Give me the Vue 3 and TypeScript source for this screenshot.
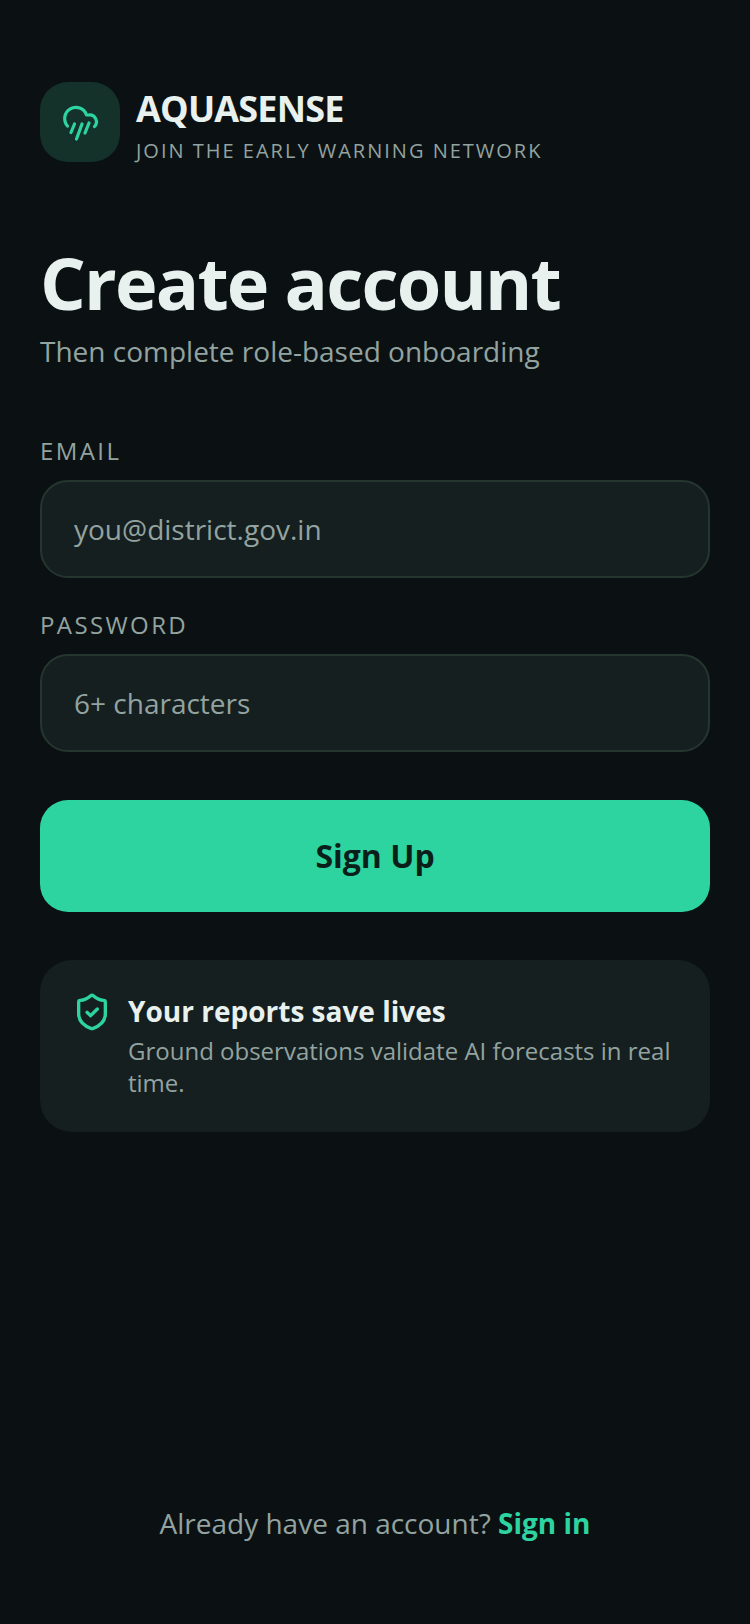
<script setup lang="ts">
const fields = [
  { label: 'EMAIL', placeholder: 'you@district.gov.in', type: 'email' },
  { label: 'PASSWORD', placeholder: '6+ characters', type: 'password' },
]
</script>

<template>
  <main class="page">
    <header class="brand">
      <div class="logo">
        <svg width="40" height="40" viewBox="0 0 40 40" fill="none" stroke="#2dd4a0" stroke-width="3.2" stroke-linecap="round" stroke-linejoin="round">
          <path d="M7.5 24A11.2 11.2 0 1 1 26.5 13h2.5A6.8 6.8 0 0 1 34.5 24.5" />
          <path d="m14.5 22-3.5 8.5" />
          <path d="m22 22-5.5 15" />
          <path d="m29 21-4 10" />
        </svg>
      </div>
      <div class="brand-text">
        <div class="brand-name">AQUASENSE</div>
        <div class="brand-sub">JOIN THE EARLY WARNING NETWORK</div>
      </div>
    </header>

    <h1 class="title">Create account</h1>
    <p class="subtitle">Then complete role-based onboarding</p>

    <form class="form" @submit.prevent>
      <div v-for="f in fields" :key="f.label" class="field">
        <label class="label">{{ f.label }}</label>
        <input class="input" :type="f.type" :placeholder="f.placeholder" />
      </div>
      <button class="submit" type="submit">Sign Up</button>
    </form>

    <section class="card">
      <svg class="card-icon" width="40" height="40" viewBox="0 0 24 24" fill="none" stroke="#2dd4a0" stroke-width="2" stroke-linecap="round" stroke-linejoin="round">
        <path d="M20 13c0 5-3.5 7.5-7.66 8.95a1 1 0 0 1-.67-.01C7.5 20.5 4 18 4 13V6a1 1 0 0 1 1-1c2 0 4.5-1.2 6.24-2.72a1.17 1.17 0 0 1 1.52 0C14.51 3.81 17 5 19 5a1 1 0 0 1 1 1z" />
        <path d="m9 12.2 2.2 2 4-4" />
      </svg>
      <div class="card-text">
        <div class="card-title">Your reports save lives</div>
        <div class="card-body">Ground observations validate AI forecasts in real time.</div>
      </div>
    </section>

    <footer class="footer">Already have an account? <a class="link">Sign in</a></footer>
  </main>
</template>

<style>
html, body { margin: 0; background: #0b1112; }
</style>

<style scoped>
* { box-sizing: border-box; }
.page {
  width: 750px;
  height: 1624px;
  padding: 82px 40px 0;
  display: flex;
  flex-direction: column;
  background: #0b1112;
  font-family: "Open Sans", sans-serif;
}
.brand { display: flex; align-items: flex-start; gap: 16px; }
.logo {
  width: 80px;
  height: 80px;
  border-radius: 28px;
  background: #14322a;
  display: flex;
  align-items: center;
  justify-content: center;
}
.brand-text { display: flex; flex-direction: column; }
.brand-name {
  font-size: 36px;
  line-height: 54px;
  font-weight: 700;
  letter-spacing: -0.8px;
  color: #e9f1ef;
}
.brand-sub {
  font-size: 20px;
  line-height: 30px;
  letter-spacing: 2px;
  color: #93a3a0;
}
.title {
  margin: 72px 0 0;
  font-size: 72px;
  line-height: 88px;
  font-weight: 700;
  letter-spacing: -1.8px;
  color: #e9f1ef;
}
.subtitle {
  margin: 5px 0 0;
  font-size: 28px;
  line-height: 40px;
  color: #93a3a0;
}
.form { margin-top: 64px; display: flex; flex-direction: column; }
.field { display: flex; flex-direction: column; gap: 13px; margin-bottom: 31px; }
.field + .field { margin-bottom: 48px; }
.label {
  font-size: 24px;
  line-height: 32px;
  letter-spacing: 2.4px;
  color: #93a3a0;
}
.input {
  height: 98px;
  padding: 0 32px;
  border: 2px solid #25362f;
  border-radius: 28px;
  background: #151f1f;
  font-family: inherit;
  font-size: 28px;
  color: #e9f1ef;
  outline: none;
}
.input::placeholder { color: #93a3a0; opacity: 1; }
.submit {
  height: 112px;
  padding: 0 0 2px;
  border: 0;
  border-radius: 28px;
  background: #2dd4a0;
  font-family: inherit;
  font-size: 32px;
  font-weight: 700;
  color: #0a1f1a;
}
.card {
  margin-top: 48px;
  padding: 32px 32px 33px;
  border-radius: 32px;
  background: #151f1f;
  display: flex;
  gap: 16px;
}
.card-icon { flex: none; }
.card-title {
  font-size: 28px;
  line-height: 38px;
  font-weight: 700;
  color: #e9f1ef;
}
.card-body {
  margin-top: 5px;
  font-size: 24px;
  line-height: 32px;
  color: #93a3a0;
}
.footer {
  margin-top: auto;
  margin-bottom: 81px;
  text-align: center;
  font-size: 28px;
  line-height: 40px;
  color: #93a3a0;
}
.link { font-weight: 700; color: #2dd4a0; }
</style>
